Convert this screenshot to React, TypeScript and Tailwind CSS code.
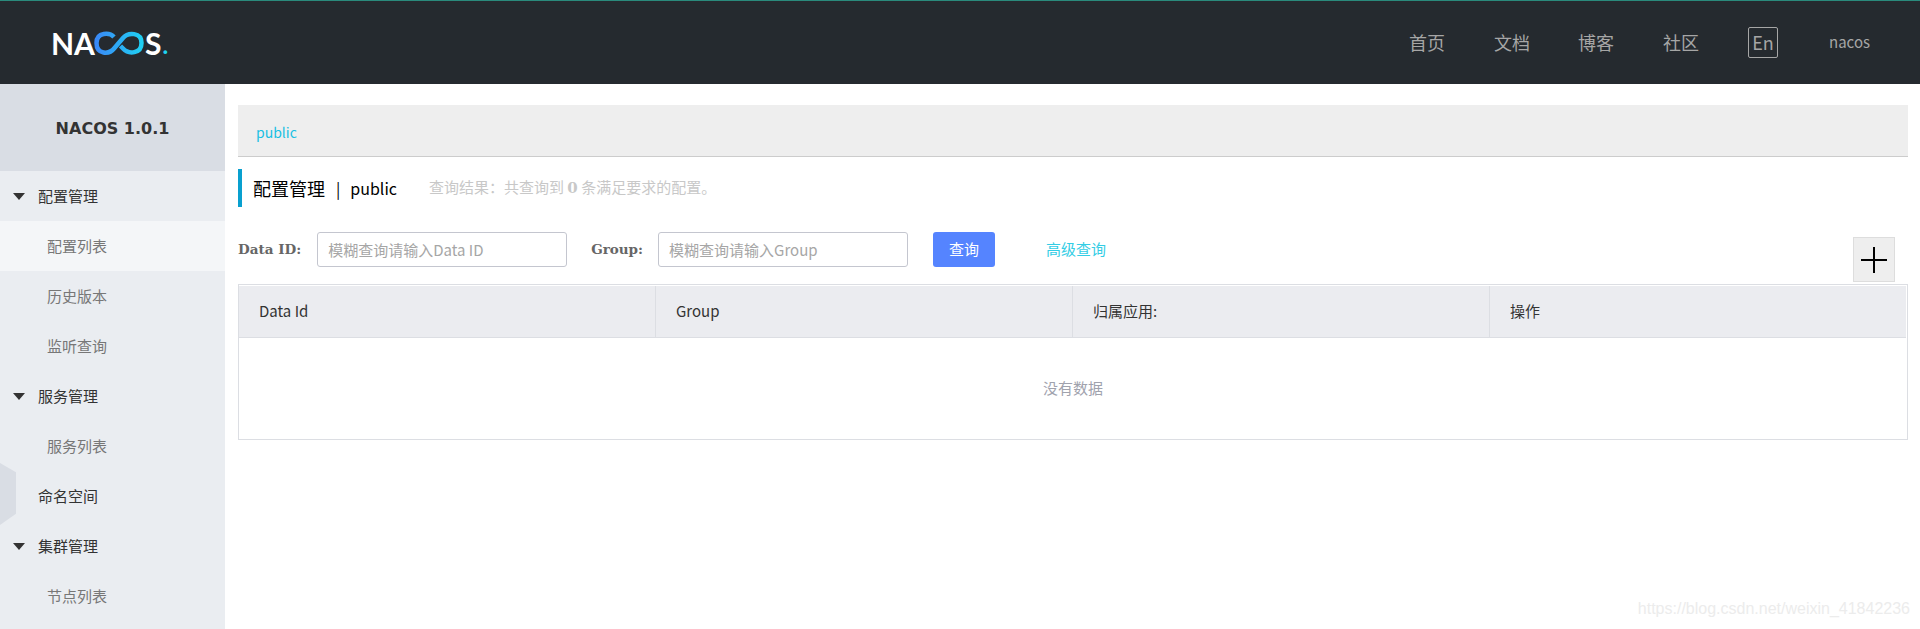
const cjk = "font-['Noto_Sans_CJK_SC','Noto_Sans',sans-serif]";

const menu = [
  { label: "配置管理", parent: true },
  { label: "配置列表", active: true },
  { label: "历史版本" },
  { label: "监听查询" },
  { label: "服务管理", parent: true },
  { label: "服务列表" },
  { label: "命名空间", top: true },
  { label: "集群管理", parent: true },
  { label: "节点列表" },
];

function Logo() {
  return (
    <div className="flex items-center h-[30px] text-white font-['Lato',sans-serif] font-bold text-[30px] leading-none">
      <span>NA</span>
      <svg width="50" height="24" viewBox="0 0 50 24" fill="none" className="-ml-[1px]">
        <defs>
          <linearGradient id="inf" x1="0" y1="0" x2="50" y2="0" gradientUnits="userSpaceOnUse">
            <stop offset="0" stopColor="#3b86f7" />
            <stop offset="1" stopColor="#1ed2f2" />
          </linearGradient>
        </defs>
        <path
          d="M20 6C16 1.5 2.5 0.5 2.5 12C2.5 23.5 15 24 20.5 17L29 7C34 1 47.5 1 47.5 12C47.5 23 34.5 23.5 29 17.5L26.5 15"
          stroke="url(#inf)"
          strokeWidth="4.5"
          strokeLinecap="butt"
        />
      </svg>
      <span className="ml-[1px]">S</span>
      <span className="text-[#1ed2f2] text-[24px] self-end ml-[1px] leading-[26px]">.</span>
    </div>
  );
}

function Header() {
  return (
    <header className="h-[84px] bg-[#252a2f] border-t border-[#2a8a7c] flex items-center pl-[51px] pr-[50px] shrink-0">
      <Logo />
      <nav className={`ml-auto flex items-center text-[#a6a6a6] text-[18px] ${cjk}`}>
        <a className="mr-[49px]">首页</a>
        <a className="mr-[48px]">文档</a>
        <a className="mr-[49px]">博客</a>
        <a className="mr-[49px]">社区</a>
        <span className="w-[30px] h-[31px] border border-[#a6a6a6] rounded-[2px] flex items-center justify-center mr-[51px]">En</span>
        <span className="text-[15px]">nacos</span>
      </nav>
    </header>
  );
}

function Sidebar() {
  return (
    <aside className={`relative w-[225px] shrink-0 bg-[#eaedf1] ${cjk}`}>
      <div className="h-[87px] bg-[#d9dde4] flex items-center justify-center pt-[2px] font-['DejaVu_Sans',sans-serif] font-bold text-[16px] text-[#333]">
        NACOS 1.0.1
      </div>
      {menu.map((item) => (
        <div
          key={item.label}
          className={`relative h-[50px] flex items-center text-[15px] ${
            item.parent || item.top ? "pl-[38px] text-[#333]" : "pl-[47px] text-[#777]"
          } ${item.active ? "bg-[#f4f6f8]" : ""}`}
        >
          {item.parent && (
            <span className="absolute left-[13px] top-[22px] w-0 h-0 border-x-[6px] border-x-transparent border-t-[7px] border-t-[#333]" />
          )}
          {item.label}
        </div>
      ))}
      <div className="absolute left-0 top-[379px] w-[16px] h-[62px] bg-[#d9dde4] [clip-path:polygon(0_0,100%_15%,100%_82%,0_100%)]" />
    </aside>
  );
}

function Field({ label, placeholder, className }: { label: string; placeholder: string; className: string }) {
  return (
    <div className={`flex items-center ${className}`}>
      <label className="font-['DejaVu_Serif',serif] font-bold text-[13.5px] text-[#666] whitespace-nowrap">{label}</label>
      <input
        placeholder={placeholder}
        className={`w-[250px] h-[35px] border border-[#c4c6cf] rounded-[3px] px-[10px] text-[15px] outline-none placeholder:text-[#a6a6a6] ${cjk}`}
      />
    </div>
  );
}

function Content() {
  return (
    <main className={`flex-1 min-w-0 pt-[21px] pl-[13px] pr-[12px] ${cjk}`}>
      <div className="h-[52px] bg-[#eeeeee] border-b border-[#cccccc] flex items-center pl-[18px] text-[14px] text-[#19c0e3] pt-[4px]">
        public
      </div>
      <div className="mt-[12px] h-[38px] border-l-[4px] border-[#09a0cf] flex items-center pl-[11px]">
        <span className="text-[18px] text-black">配置管理</span>
        <span className="ml-[11px] text-[16px] text-black">|</span>
        <span className="ml-[10px] text-[16px] text-black">public</span>
        <span className="ml-[32px] text-[15px] text-[#c8c8c8]">
          查询结果：共查询到 <strong className="font-['DejaVu_Serif',serif] font-bold">0</strong> 条满足要求的配置。
        </span>
      </div>
      <div className="mt-[25px] flex items-start h-[50px]">
        <Field label="Data ID:" placeholder="模糊查询请输入Data ID" className="gap-[16px]" />
        <Field label="Group:" placeholder="模糊查询请输入Group" className="ml-[24px] gap-[15px]" />
        <button className="ml-[25px] w-[62px] h-[35px] bg-[#5584ff] rounded-[3px] text-white text-[15px]">查询</button>
        <a className="ml-[51px] h-[35px] flex items-center text-[15px] text-[#33cde5]">高级查询</a>
        <button className="ml-auto mr-[13px] mt-[5px] w-[42px] h-[45px] bg-[#eeeeee] border border-[#dddddd] flex items-center justify-center">
          <svg width="26" height="26" viewBox="0 0 26 26">
            <path d="M0 13H26M13 0V26" stroke="#000" strokeWidth="2" />
          </svg>
        </button>
      </div>
      <div className="mt-[2px] border border-[#dcdee3] h-[156px] text-[15px]">
        <div className="mt-[1px] mr-[1px] h-[52px] bg-[#ebecf0] border-b border-[#dcdee3] grid grid-cols-[416px_417px_417px_1fr] text-[#333]">
          {["Data Id", "Group", "归属应用:", "操作"].map((title, i) => (
            <div key={title} className={`flex items-center pl-[20px] ${i > 0 ? "border-l border-[#dcdee3]" : ""}`}>
              {title}
            </div>
          ))}
        </div>
        <div className="h-[101px] flex items-center justify-center text-[#a0a2ad]">没有数据</div>
      </div>
    </main>
  );
}

export default function App() {
  return (
    <div className="relative h-[629px] overflow-hidden flex flex-col bg-white">
      <Header />
      <div className="flex flex-1 min-h-0">
        <Sidebar />
        <Content />
      </div>
      <span className="absolute right-[10px] bottom-[8px] font-['Liberation_Sans',sans-serif] text-[16px] text-[#ececec]">
        https://blog.csdn.net/weixin_41842236
      </span>
    </div>
  );
}
